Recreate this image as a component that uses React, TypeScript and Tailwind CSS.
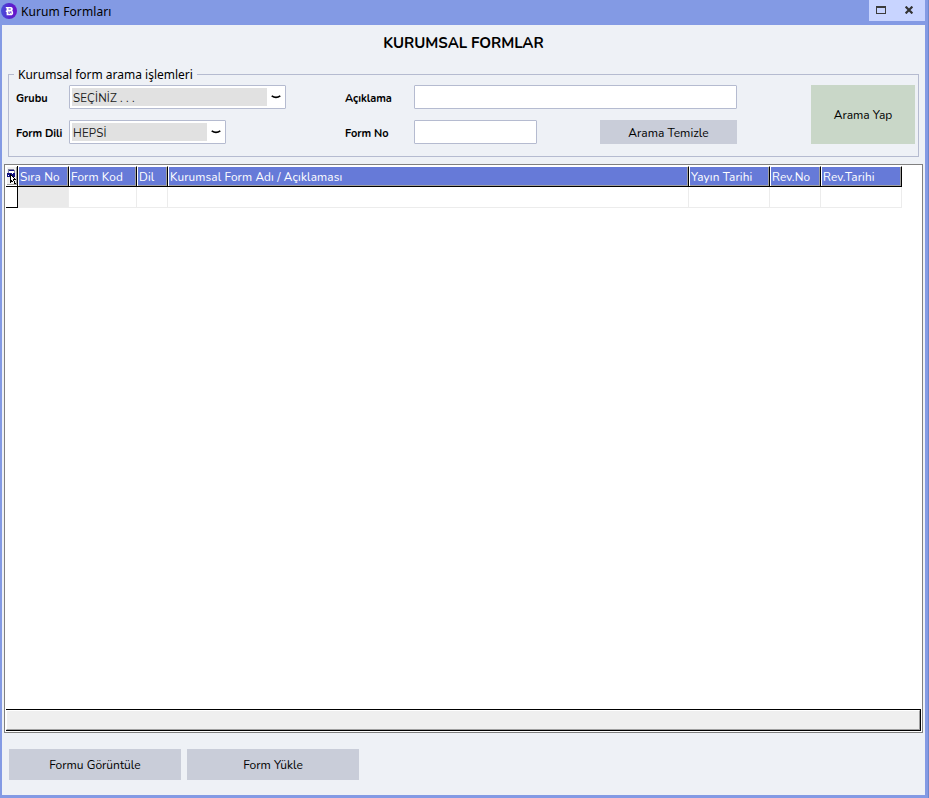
import type { ReactNode } from "react";

const COLUMNS = [
  { label: "Sıra No", width: "w-[51px]" },
  { label: "Form Kod", width: "w-[68px]" },
  { label: "Dil", width: "w-[31px]" },
  { label: "Kurumsal Form Adı / Açıklaması", width: "w-[521px]" },
  { label: "Yayın Tarihi", width: "w-[81px]" },
  { label: "Rev.No", width: "w-[51px]" },
  { label: "Rev.Tarihi", width: "w-[81px]" },
];

function Logo() {
  return (
    <svg width="16" height="16" viewBox="0 0 16 16">
      <defs>
        <linearGradient id="logo" x1="0" x2="1">
          <stop offset="0" stopColor="#4650d8" />
          <stop offset="0.6" stopColor="#5a22cf" />
          <stop offset="1" stopColor="#6a10c8" />
        </linearGradient>
      </defs>
      <circle cx="8" cy="8" r="8" fill="url(#logo)" />
      <path
        fillRule="evenodd"
        fill="#fff"
        d="M4.8 4h5.4l1.5 1v2l-.5.8.9.9v2.4l-1.3 1.2H5.6V9H4.8V7.5h.8V5.2h-.8zM7.5 5.4v1.2h2.3V5.4zM7.4 8.4v2.4h3V8.4z"
      />
      <path d="M8 8.6h1v1H8zM9 9.7h1v1H9z" fill="#fff" />
    </svg>
  );
}

function TitleBar() {
  return (
    <header className="flex h-[25px] justify-between">
      <div className="flex h-[22px] items-center gap-1 pl-px">
        <Logo />
        <span className="pt-0.5 font-['Noto_Sans',sans-serif] text-[12px] leading-[22px] tracking-[0.1px]">
          Kurum Formları
        </span>
      </div>
      <div className="mr-[3px] flex h-[21px] w-14 bg-[#c8d4ff]">
        <button className="w-7 pb-px pl-[7px]" aria-label="Maximize">
          <svg width="10" height="8" shapeRendering="crispEdges">
            <path d="M0 0h10v8H0zM1 2v5h8V2z" fill="#3c3c3c" fillRule="evenodd" />
          </svg>
        </button>
        <button className="w-7 pb-px pl-2" aria-label="Close">
          <svg width="8" height="8" viewBox="0 0 8 8">
            <path d="M.6.6l6.8 6.8M7.4.6L.6 7.4" stroke="#333" strokeWidth="2.2" />
          </svg>
        </button>
      </div>
    </header>
  );
}

function Label({ children }: { children: ReactNode }) {
  return (
    <label className="pt-[3px] text-[11px] leading-4 font-bold tracking-[-0.05px] whitespace-nowrap">
      {children}
    </label>
  );
}

function Combo({ value, className }: { value: string; className: string }) {
  return (
    <div
      className={`flex h-6 rounded-[1px] border border-[#b5bbd0] bg-white p-0.5 ${className}`}
    >
      <span className="flex-1 bg-[#e1e1e1] pl-px text-[11.5px] leading-[20px] tracking-[0.18px] whitespace-pre text-[#222]">
        {value}
      </span>
      <span className="flex w-4 items-center justify-end pr-0.5">
        <svg width="10" height="4" viewBox="0 0 10 4">
          <path d="M.7.9Q5 3.9 9.3.9" fill="none" stroke="#000" strokeWidth="1.7" />
        </svg>
      </span>
    </div>
  );
}

function TextBox({ className }: { className: string }) {
  return (
    <input
      className={`h-6 rounded-[1px] border border-[#b5bbd0] bg-white outline-none ${className}`}
    />
  );
}

function SearchPanel() {
  return (
    <section className="mx-1.5 flex h-[90px] flex-col">
      {/* caption sits on the top border */}
      <div className="flex h-[14px] items-start">
        <span className="mt-[7px] h-[7px] w-1.5 border-t border-l border-[#b5bbd0]" />
        <span className="w-[183px] pl-1 font-['Noto_Sans',sans-serif] text-[12px] leading-[16px] whitespace-nowrap">
          Kurumsal form arama işlemleri
        </span>
        <span className="mt-[7px] h-[7px] flex-1 border-t border-r border-[#b5bbd0]" />
      </div>
      <div className="flex flex-1 border border-t-0 border-[#b5bbd0] pt-1 pl-[7px]">
        <div className="grid h-[59px] grid-cols-[53px_276px_69px_186px_211px_104px] grid-rows-[24px_24px] items-center gap-y-[11px]">
          <Label>Grubu</Label>
          <Combo value="SEÇİNİZ . . ." className="w-[217px]" />
          <Label>Açıklama</Label>
          <TextBox className="col-span-2 w-[323px]" />
          <button className="row-span-2 h-[59px] w-[104px] bg-[#c9d7c8] text-[12px]">
            Arama Yap
          </button>
          <Label>Form Dili</Label>
          <Combo value="HEPSİ" className="w-[157px]" />
          <Label>Form No</Label>
          <TextBox className="w-[123px]" />
          <button className="h-6 w-[137px] bg-[#c9cdd9] pt-[3px] text-[12px] leading-[21px]">
            Arama Temizle
          </button>
        </div>
      </div>
    </section>
  );
}

function MenuCorner() {
  return (
    <svg width="12" height="20" shapeRendering="crispEdges">
      <path d="M1 1h9v18H1z" fill="#f0f0f0" />
      <path d="M1 18h9v1H1zM10 1h1v18h-1z" fill="#a0a0a0" />
      <path d="M2 3h6v8H2z" fill="#fff" />
      <path d="M2 3h1v4H2zM2 3h6v1H2zM8 4h1v6H8z" fill="#8080a0" />
      <path d="M3 4h5v1H3zM1 7h8v4H1z" fill="#101080" />
      <path d="M2 9h1v1H2zM6 7h1v1H6z" fill="#fff" />
      <path d="M4 8l6 6H8l2 4H8l-2-3-2 2z" fill="#000" />
      <path d="M5 10h1v1h1v1h1v1h-1v2H6v-1H5zM7 15h1v2H7z" fill="#fff" />
      <path d="M11 0h1v20h-1z" fill="#000" />
    </svg>
  );
}

function Grid() {
  return (
    <section className="mx-0.5 mt-[7px] flex h-[569px] flex-col border border-[#808080] bg-white p-px">
      <div className="flex h-[21px] w-[896px] border-b border-black">
        <MenuCorner />
        {COLUMNS.map((col) => (
          <div
            key={col.label}
            className={`h-5 border-t border-r border-l border-t-white border-r-black border-l-white ${col.width}`}
          >
            <div className="h-[19px] border-r border-b border-[#a0a0a0] bg-[#667ad8] pl-px text-[11.8px] leading-5 tracking-[0.14px] whitespace-nowrap text-white">
              {col.label}
            </div>
          </div>
        ))}
      </div>
      <div className="flex h-[21px]">
        <div className="w-3 border-r border-b border-black" />
        {COLUMNS.map((col, i) => (
          <div
            key={col.label}
            className={`border-r border-b border-[#ececec] ${col.width} ${
              i === 0 ? "bg-[#eaeaea]" : ""
            }`}
          />
        ))}
      </div>
      <div className="flex-1" />
      <div className="h-[22px] border-t border-r border-b border-black">
        <div className="h-5 border-t border-r border-b border-l border-t-white border-r-[#a0a0a0] border-b-[#a0a0a0] border-l-white bg-[#efefef]" />
      </div>
    </section>
  );
}

export default function App() {
  return (
    <main className="h-[798px] w-[929px] overflow-hidden border-r border-[#6f88cc] bg-[#839ae4] font-['Nunito','Noto_Sans',sans-serif] text-black">
      <TitleBar />
      <div className="mr-[3px] ml-0.5 h-[770px] bg-[#eef1f6]">
        <h1 className="h-[42px] text-center text-[15px] leading-9 font-bold tracking-[-0.06px]">
          KURUMSAL FORMLAR
        </h1>
        <SearchPanel />
        <Grid />
        <footer className="mt-4 ml-[7px] flex gap-1.5">
          <button className="h-[31px] w-[172px] bg-[#c9cdd9] text-[12px]">
            Formu Görüntüle
          </button>
          <button className="h-[31px] w-[172px] bg-[#c9cdd9] text-[12px]">
            Form Yükle
          </button>
        </footer>
      </div>
    </main>
  );
}
